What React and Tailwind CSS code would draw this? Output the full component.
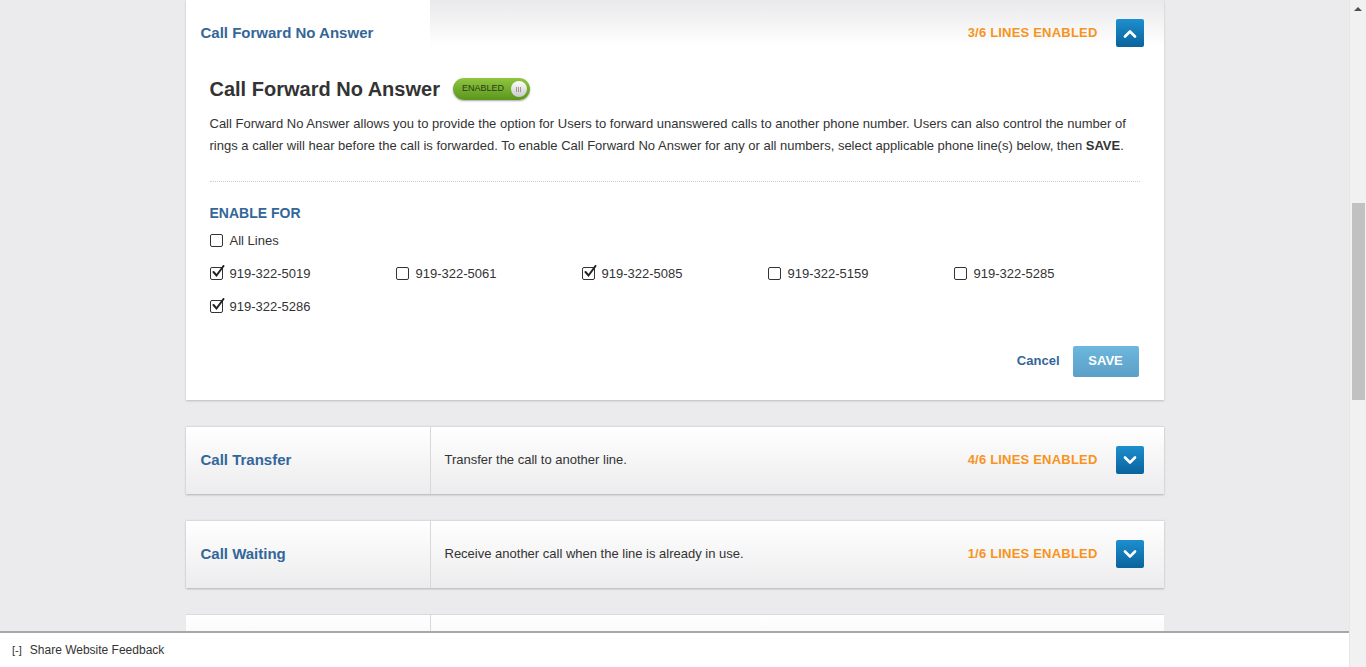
import { useState } from "react";

const lines = [
  { num: "919-322-5019", on: true },
  { num: "919-322-5061", on: false },
  { num: "919-322-5085", on: true },
  { num: "919-322-5159", on: false },
  { num: "919-322-5285", on: false },
  { num: "919-322-5286", on: true },
];

const features = [
  { name: "Call Transfer", desc: "Transfer the call to another line.", status: "4/6 LINES ENABLED" },
  { name: "Call Waiting", desc: "Receive another call when the line is already in use.", status: "1/6 LINES ENABLED" },
];

const Chevron = ({ up }) => (
  <svg width="14" height="9" viewBox="0 0 14 9" fill="none">
    <path
      d={up ? "M2 7.5 L7 2.5 L12 7.5" : "M2 1.5 L7 6.5 L12 1.5"}
      stroke="white"
      strokeWidth="2.6"
      strokeLinecap="round"
      strokeLinejoin="round"
    />
  </svg>
);

const ToggleButton = ({ up }) => (
  <button className="w-[28px] h-[28px] rounded-[2px] bg-gradient-to-b from-[#1d8fcf] to-[#0a639c] flex items-center justify-center">
    <Chevron up={up} />
  </button>
);

const Check = ({ checked, onClick }) => (
  <span
    onClick={onClick}
    className="relative w-[13px] h-[13px] border border-[#333] rounded-[2px] bg-white inline-block cursor-pointer shrink-0"
  >
    {checked && (
      <svg className="absolute left-[1px] top-[-3px]" width="13" height="13" viewBox="0 0 13 13">
        <path d="M1.5 7 L4.5 10.5 L11.5 1" stroke="#222" strokeWidth="2" fill="none" strokeLinecap="round" />
      </svg>
    )}
  </span>
);

const App = () => {
  const [checked, setChecked] = useState(lines.map((l) => l.on));
  const [all, setAll] = useState(false);

  return (
    <div
      className="flex w-full h-screen overflow-hidden bg-[#ebebed] text-[#333]"
      style={{ fontFamily: '"Liberation Sans", Arial, sans-serif' }}
    >
      <div className="relative flex-1 flex flex-col">
        <div className="flex-1">
          <div className="mx-auto w-[978px] flex flex-col gap-[26px]">
            {/* Expanded card */}
            <div className="bg-white shadow-[0_1px_2px_rgba(0,0,0,0.2)]">
              <div className="flex h-[66px]">
                <div className="w-[244px] bg-white flex items-center pl-[15px]">
                  <span className="text-[15px] font-bold text-[#336699]">Call Forward No Answer</span>
                </div>
                <div className="flex-1 flex items-center justify-end pr-[20px] gap-[18px] bg-gradient-to-b from-[#e9e9eb] to-white to-70%">
                  <span className="text-[13px] font-bold text-[#f7941d] tracking-[0.2px]">3/6 LINES ENABLED</span>
                  <ToggleButton up />
                </div>
              </div>
              <div className="px-[24px] pb-[23px]">
                <div className="mt-[1px] flex items-center gap-[13px] h-[44px]">
                  <h2 className="text-[20px] font-bold text-[#333]">Call Forward No Answer</h2>
                  <div className="w-[77px] h-[22px] rounded-full bg-gradient-to-b from-[#8ec63f] to-[#5b961c] shadow-[0_1px_2px_rgba(0,0,0,0.35)] flex items-center justify-between pl-[9px] pr-[3px]">
                    <span className="text-[9px] text-[#2e3a1a]">ENABLED</span>
                    <span className="w-[16px] h-[16px] rounded-full bg-gradient-to-b from-white to-[#c9c9c9] flex items-center justify-center gap-[1px]">
                      <span className="w-[1px] h-[5px] bg-[#999]" />
                      <span className="w-[1px] h-[5px] bg-[#999]" />
                      <span className="w-[1px] h-[5px] bg-[#999]" />
                    </span>
                  </div>
                </div>
                <p className="mt-[2px] text-[13px] leading-[22px] text-[#333] pr-[10px]">
                  Call Forward No Answer allows you to provide the option for Users to forward unanswered calls to another phone number. Users can also control the number of rings a caller will hear before the call is forwarded. To enable Call Forward No Answer for any or all numbers, select applicable phone line(s) below, then <b>SAVE</b>.
                </p>
                <div className="mt-[24px] border-t border-dotted border-[#cfcfcf]" />
                <div className="mt-[21px] text-[14px] font-bold text-[#336699]">ENABLE FOR</div>
                <label className="mt-[7px] flex items-center gap-[7px] text-[13px]">
                  <Check checked={all} onClick={() => setAll(!all)} />
                  All Lines
                </label>
                <div className="mt-[13px] grid grid-cols-5 gap-y-[14px] w-[930px]">
                  {lines.map((l, i) => (
                    <label key={l.num} className="flex items-center gap-[7px] text-[13px] text-[#333]">
                      <Check
                        checked={checked[i]}
                        onClick={() => setChecked(checked.map((c, j) => (j === i ? !c : c)))}
                      />
                      {l.num}
                    </label>
                  ))}
                </div>
                <div className="mt-[29px] mr-[1px] flex justify-end items-center gap-[13px]">
                  <button className="text-[13px] font-bold text-[#336699]">Cancel</button>
                  <button className="w-[66px] h-[31px] rounded-[2px] bg-gradient-to-b from-[#6db7df] to-[#5b9fc6] text-white text-[13px] font-bold">
                    SAVE
                  </button>
                </div>
              </div>
            </div>

            {/* Collapsed cards */}
            {features.map((f) => (
              <div
                key={f.name}
                className="flex h-[68px] bg-gradient-to-b from-white to-[#ececee] shadow-[0_1px_2px_rgba(0,0,0,0.25)] border-t border-[#dadadc]"
              >
                <div className="w-[245px] border-r border-[#d8d8da] flex items-center pl-[15px]">
                  <span className="text-[15px] font-bold text-[#336699]">{f.name}</span>
                </div>
                <div className="flex-1 flex items-center pl-[14px] pr-[20px]">
                  <span className="flex-1 text-[13px] text-[#333]">{f.desc}</span>
                  <span className="text-[13px] font-bold text-[#f7941d] tracking-[0.2px] mr-[18px]">{f.status}</span>
                  <ToggleButton />
                </div>
              </div>
            ))}
            <div className="flex h-[68px] bg-gradient-to-b from-white to-[#ececee] border-t border-[#dadadc]">
              <div className="w-[245px] border-r border-[#d8d8da]" />
              <div className="flex-1" />
            </div>
          </div>
        </div>

        {/* Footer */}
        <div className="absolute left-0 right-0 bottom-0 h-[36px] bg-white border-t-2 border-[#a8a8a8] flex items-center pl-[12px] gap-[8px] text-[12px] text-[#333]">
          <span className="text-[11px]">[-]</span>
          <span>Share Website Feedback</span>
        </div>
      </div>

      {/* Scrollbar */}
      <div className="w-[17px] h-full bg-[#f1f1f1] flex flex-col items-center border-l border-[#e6e6e6]">
        <div className="h-[17px] flex items-center justify-center">
          <span className="w-0 h-0 border-l-[4px] border-r-[4px] border-b-[4px] border-l-transparent border-r-transparent border-b-[#505050]" />
        </div>
        <div className="mt-[186px] w-[13px] h-[197px] bg-[#c1c1c1]" />
      </div>
    </div>
  );
};

export default App;
